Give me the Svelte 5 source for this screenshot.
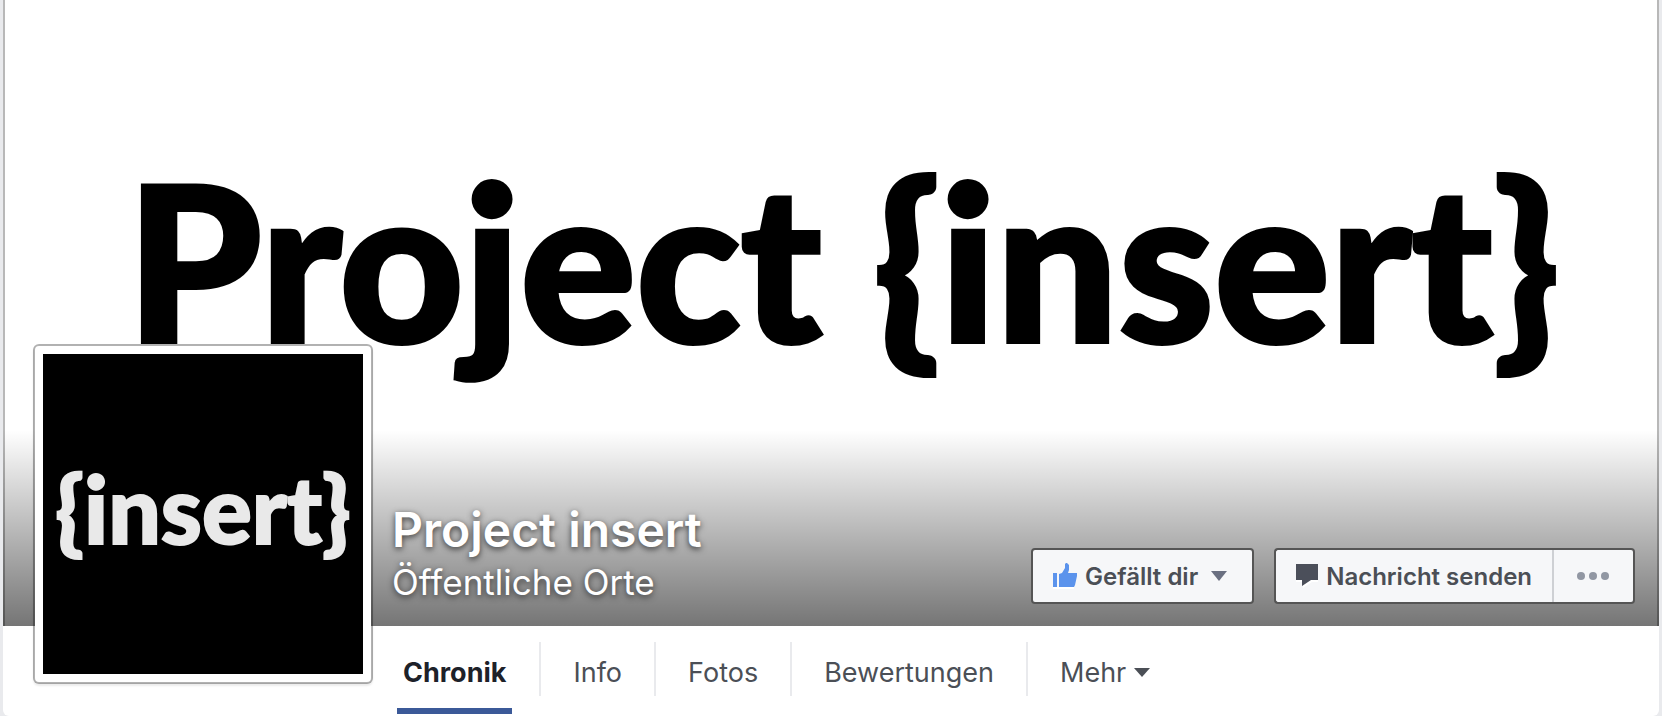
<script lang="ts">
	type Tab = {
		label: string;
		href: string;
	};

	const tabs: Tab[] = [
		{ label: 'Chronik', href: '#chronik' },
		{ label: 'Info', href: '#info' },
		{ label: 'Fotos', href: '#fotos' },
		{ label: 'Bewertungen', href: '#bewertungen' },
	];

	let active = $state('Chronik');
</script>

<div class="page">
	<header class="cover">
		<div class="wordmark">Project &#123;insert&#125;</div>

		<div class="cover-bar">
			<div class="titles">
				<h1>Project insert</h1>
				<p>Öffentliche Orte</p>
			</div>

			<div class="actions">
				<button class="btn btn-like" type="button">
					<svg width="24" height="26" viewBox="0 0 24 26" aria-hidden="true">
						<path fill="#fff" d="M0 24h21v2H0z" />
						<path fill="#5b93ec" d="M0 10h4v14H0zM6 11l3-1 3-5V1l1-1h1l2 2v5l-1 3h9v3l-2 9-1 2H6z" />
					</svg>
					<span>Gefällt dir</span>
					<svg class="caret" width="16" height="10" viewBox="0 0 16 10" aria-hidden="true">
						<path fill="#6a7081" d="M0 0h16L8 10z" />
					</svg>
				</button>

				<div class="group">
					<button class="btn btn-message" type="button">
						<svg width="22" height="24" viewBox="0 0 22 24" aria-hidden="true">
							<path fill="#fff" d="M0 4h22v14h-6l-9 6v-6H0z" />
							<path fill="#4b4f5a" d="M0 0h22v16h-7l-9 6v-6H0z" />
						</svg>
						<span>Nachricht senden</span>
					</button>
					<button class="btn btn-more" type="button" aria-label="Weitere Optionen">
						<svg width="32" height="8" viewBox="0 0 32 8" aria-hidden="true" fill="#9197a3">
							<circle cx="4" cy="4" r="4" />
							<circle cx="16" cy="4" r="4" />
							<circle cx="28" cy="4" r="4" />
						</svg>
					</button>
				</div>
			</div>
		</div>

		<a class="avatar" href="#profilbild">
			<span>&#123;insert&#125;</span>
		</a>
	</header>

	<nav class="tabs">
		{#each tabs as tab}
			<a href={tab.href} class:active={active === tab.label} onclick={() => (active = tab.label)}>
				<span>{tab.label}</span>
			</a>
		{/each}
		<button type="button">
			<span>Mehr</span>
			<svg width="16" height="9" viewBox="0 0 16 9" aria-hidden="true">
				<path fill="#4b4f56" d="M0 0h16L8 9z" />
			</svg>
		</button>
	</nav>
</div>

<style>
	:global(body) {
		margin: 0;
		background: #e9eaed;
	}

	.page {
		margin: 0 3px;
		background: #fff;
		border-radius: 0 0 6px 6px;
		font-family: Inter, 'Liberation Sans', sans-serif;
	}

	.cover {
		position: relative;
		display: flex;
		flex-direction: column;
		justify-content: space-between;
		box-sizing: border-box;
		aspect-ratio: 1656 / 626;
		border: solid rgba(0, 0, 0, 0.28);
		border-width: 0 2px;
		background: linear-gradient(rgba(0, 0, 0, 0) 430px, rgba(0, 0, 0, 0.54)) border-box;
	}

	.wordmark {
		padding: 124px 0 0 24px;
		font-family: Lato, sans-serif;
		font-size: 216px;
		font-weight: 900;
		line-height: 270px;
		text-align: center;
		white-space: nowrap;
		color: #000;
		-webkit-text-stroke: 4px #000;
	}

	.cover-bar {
		display: flex;
		align-items: flex-end;
		justify-content: space-between;
		padding: 0 22px 22px 387px;
	}

	.titles {
		color: #fff;
		text-shadow: 0 2px 6px rgba(0, 0, 0, 0.7);
	}

	h1 {
		margin: 0;
		font-size: 48px;
		font-weight: 600;
		line-height: 60px;
	}

	p {
		margin: 0;
		font-size: 35px;
		font-weight: 400;
		line-height: 44px;
	}

	.actions {
		display: flex;
		gap: 20px;
	}

	.btn {
		display: flex;
		align-items: center;
		gap: 8px;
		box-sizing: border-box;
		height: 56px;
		padding: 0 20px;
		border: 2px solid #555;
		border-radius: 4px;
		background: #f6f7f9;
		color: #4b4f56;
		font: 600 24px Inter, 'Liberation Sans', sans-serif;
		white-space: nowrap;
		cursor: pointer;
	}

	.caret {
		margin: 0 5px;
	}

	.group {
		display: flex;
	}

	.btn-message {
		border-right: 0;
		border-radius: 4px 0 0 4px;
	}

	.btn-more {
		padding: 0 24px 0 25px;
		border-left: 0;
		border-radius: 0 4px 4px 0;
		box-shadow: inset 2px 0 #ced0d4;
	}

	.avatar {
		position: absolute;
		top: 344px;
		left: 28px;
		display: flex;
		align-items: center;
		justify-content: center;
		width: 320px;
		height: 320px;
		border: 2px solid rgba(0, 0, 0, 0.3);
		border-radius: 6px;
		padding: 8px;
		background: linear-gradient(#000, #000) content-box, #fff padding-box;
		box-shadow: 0 2px 2px rgba(0, 0, 0, 0.08);
		color: #e9e9e9;
		font-family: Lato, sans-serif;
		font-size: 93px;
		font-weight: 900;
		text-decoration: none;
		-webkit-text-stroke: 2px #e9e9e9;
	}

	.avatar span {
		padding-bottom: 12px;
	}

	.tabs {
		display: flex;
		align-items: flex-start;
		padding: 16px 0 2px 394px;
	}

	.tabs a,
	.tabs button {
		display: flex;
		align-items: center;
		gap: 8px;
		box-sizing: border-box;
		height: 54px;
		padding: 6px 32px 0;
		border: 0;
		border-left: 2px solid #e9eaed;
		background: none;
		color: #4b4f56;
		font: 400 27px Inter, 'Liberation Sans', sans-serif;
		text-decoration: none;
		cursor: pointer;
	}

	.tabs a.active {
		height: 72px;
		margin-right: 27px;
		padding: 6px 6px 12px;
		border: 0;
		border-bottom: 6px solid #3b5998;
		color: #1d2129;
		font-weight: 700;
	}
</style>
